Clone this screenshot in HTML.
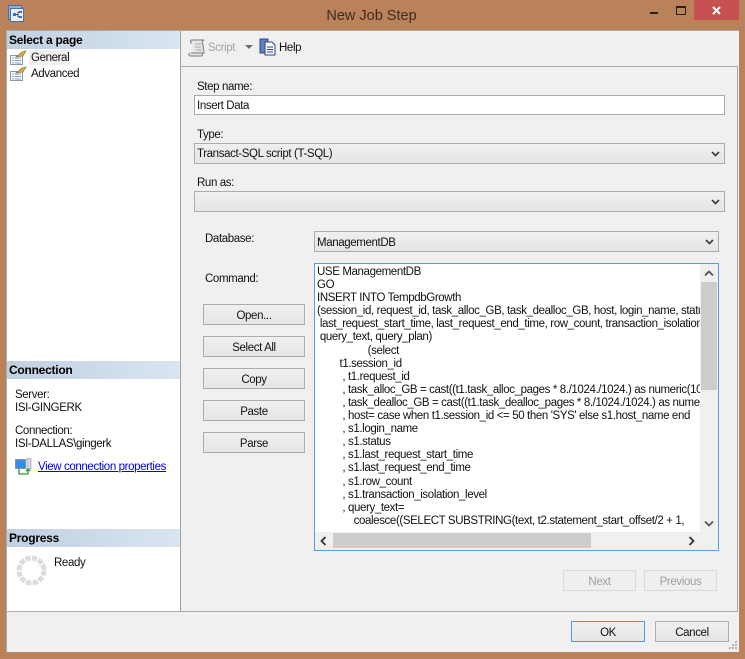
<!DOCTYPE html>
<html><head><meta charset="utf-8"><style>
html,body{margin:0;padding:0}
body{width:745px;height:659px;overflow:hidden;position:relative;background:#b9825a;font:11.5px/15px "Liberation Sans",sans-serif;letter-spacing:-.38px;color:#111}
.a,.t{position:absolute;white-space:nowrap}
.t{margin-top:1px}
.hdr{position:absolute;left:7px;width:173px;height:18px;background:linear-gradient(90deg,#c0d0e0,#d9e5f1);font-weight:bold;font-size:12px;letter-spacing:-.25px;line-height:18px;text-indent:2px;color:#000}
.btn{position:absolute;left:203px;width:100px;height:19px;border:1px solid #adadad;background:linear-gradient(#f0f0f0,#e5e5e5);text-align:center;line-height:23px}
.inp{position:absolute;box-sizing:border-box;border:1px solid #ababab;background:#fff;padding-left:2px}
.combo{position:absolute;box-sizing:border-box;border:1px solid #acacac;background:linear-gradient(#f0f0f0,#e5e5e5);padding-left:2px}
.code div{height:13.1px;line-height:13px}
</style></head><body>
<div class="t" style="left:-1px;top:7px;margin-top:0;width:745px;text-align:center;font-size:14.5px;letter-spacing:0;line-height:18px;color:#3f2c20">New Job Step</div>
<svg class="a" style="left:8px;top:5px" width="17" height="18"><rect x=".5" y=".5" width="13" height="14" fill="#8fb0dc" stroke="#4e6f9e"/><rect x="2.500" y="3.500" width="13" height="13" fill="#e6effa" stroke="#4e6f9e"/><rect x="5" y="8" width="3" height="3" fill="#3c6fc0"/><rect x="11" y="6" width="3" height="2" fill="#3c6fc0"/><rect x="11" y="11" width="3" height="2" fill="#3c6fc0"/><path d="M8 9.500h2M10 7v5M10 7h1M10 12h1" stroke="#444" fill="none"/></svg>
<div class="a" style="left:650px;top:12px;width:8px;height:2px;background:#222"></div>
<div class="a" style="left:676px;top:6px;width:8px;height:6px;border:1px solid #222;border-top-width:2px"></div>
<div class="a" style="left:694px;top:0;width:45px;height:20px;background:#c75050"></div>
<svg class="a" style="left:712px;top:6px" width="10" height="9"><path d="M1 1l7 7M8 1l-7 7" stroke="#fff" stroke-width="2" fill="none"/></svg>

<div class="a" style="left:6px;top:30px;width:733px;height:622px;background:#f0f0f0;border-top:1px solid #a9a9a9;border-left:1px solid #a9a9a9;box-sizing:border-box"></div>
<div class="a" style="left:7px;top:31px;width:173px;height:580px;background:#fff"></div>
<div class="a" style="left:180px;top:31px;width:1px;height:580px;background:#a0a0a8"></div>
<div class="a" style="left:181px;top:66px;width:556px;height:1px;background:#a9a9b3"></div>
<div class="a" style="left:737px;top:66px;width:1px;height:545px;background:#a9a9b3"></div>
<div class="a" style="left:7px;top:611px;width:731px;height:1px;background:#a9a9b3"></div>

<div class="hdr" style="top:31px">Select a page</div>
<div class="a" style="left:29px;top:50px;width:41px;height:15px;background:#f0f0f0"></div>
<svg class="a" style="left:10px;top:50px" width="17" height="15"><path d="M.5 5.500h12v9H.5z" fill="#fff" stroke="#8a97a8"/><path d="M2 8h2M5 8h6M2 10.500h2M5 10.500h6M2 13h2M5 13h6" stroke="#7f9cc6"/><path d="M6 7l6-5 4-1-3 5z" fill="#d9a93a" stroke="#7d7030" stroke-width=".6"/></svg>
<svg class="a" style="left:10px;top:66px" width="17" height="15"><path d="M.5 5.500h12v9H.5z" fill="#fff" stroke="#8a97a8"/><path d="M2 8h2M5 8h6M2 10.500h2M5 10.500h6M2 13h2M5 13h6" stroke="#7f9cc6"/><path d="M6 7l6-5 4-1-3 5z" fill="#d9a93a" stroke="#7d7030" stroke-width=".6"/></svg>
<div class="t" style="left:31px;top:50px">General</div>
<div class="t" style="left:31px;top:66px">Advanced</div>

<div class="hdr" style="top:361px">Connection</div>
<div class="t" style="left:15px;top:387px">Server:</div>
<div class="t" style="left:15px;top:400px">ISI-GINGERK</div>
<div class="t" style="left:15px;top:423px">Connection:</div>
<div class="t" style="left:15px;top:436px">ISI-DALLAS\gingerk</div>
<svg class="a" style="left:15px;top:458px" width="17" height="18"><rect x=".5" y="1.500" width="10" height="9" fill="#2f8fe8" stroke="#8a93a0"/><rect x="12" y="0" width="4" height="11" fill="#d5d8de" stroke="#8a93a0" stroke-width=".6"/><path d="M4 11v5h9v-5M11 13l2-2 2 2" fill="none" stroke="#2e9a2e" stroke-width="1.300"/></svg>
<div class="t" style="left:38px;top:459px;color:#0000e6;text-decoration:underline">View connection properties</div>

<div class="hdr" style="top:529px">Progress</div>
<svg class="a" style="left:16px;top:555px" width="31" height="31"><circle cx="15.500" cy="15.500" r="12.500" fill="none" stroke="#dcdcdc" stroke-width="5" stroke-dasharray="5.200 1.350"/></svg>
<div class="t" style="left:54px;top:555px">Ready</div>

<svg class="a" style="left:188px;top:39px" width="18" height="18"><path d="M4 1h12c-2 1-2 3-1 5l1 8H5M4 1c-2 0-2 3 0 3M2 14c-2 1-1 3 1 3h10c2 0 2-3 0-3H3" fill="#e8e8e8" stroke="#8f8f8f" stroke-width="1.200"/><path d="M7 5h6M7 8h6M8 11h6" stroke="#a9a9a9"/></svg>
<div class="t" style="left:208px;top:40px;color:#a4a4a4">Script</div>
<div class="a" style="left:245px;top:45px;width:0;height:0;border:4px solid transparent;border-top:4px solid #6e6e6e;border-bottom:0"></div>
<svg class="a" style="left:259px;top:38px" width="17" height="18"><rect x="1" y="1" width="8" height="14" fill="#5f7fc4" stroke="#32477c"/><path d="M6 4h7l3 3v10H6z" fill="#f5f7fb" stroke="#32477c"/><path d="M8 9h6M8 11.500h6M8 14h6" stroke="#32477c"/></svg>
<div class="t" style="left:279px;top:40px">Help</div>

<div class="t" style="left:197px;top:79px">Step name:</div>
<div class="inp" style="left:194px;top:95px;width:531px;height:20px;line-height:20px">Insert Data</div>
<div class="t" style="left:197px;top:127px">Type:</div>
<div class="combo" style="left:194px;top:143px;width:531px;height:21px;line-height:21px">Transact-SQL script (T-SQL)</div>
<div class="t" style="left:197px;top:175px">Run as:</div>
<div class="combo" style="left:194px;top:191px;width:531px;height:21px"></div>
<svg class="a" style="left:711px;top:151px" width="9" height="6"><path d="M1 1l3.500 3.500L8 1" fill="none" stroke="#444" stroke-width="1.800"/></svg>
<svg class="a" style="left:711px;top:199px" width="9" height="6"><path d="M1 1l3.500 3.500L8 1" fill="none" stroke="#444" stroke-width="1.800"/></svg>

<div class="t" style="left:205px;top:231px">Database:</div>
<div class="combo" style="left:314px;top:231px;width:405px;height:21px;line-height:22px">ManagementDB</div>
<svg class="a" style="left:705px;top:239px" width="9" height="6"><path d="M1 1l3.500 3.500L8 1" fill="none" stroke="#444" stroke-width="1.800"/></svg>
<div class="t" style="left:205px;top:271px">Command:</div>

<div class="btn" style="top:304px">Open...</div>
<div class="btn" style="top:336px">Select All</div>
<div class="btn" style="top:368px">Copy</div>
<div class="btn" style="top:400px">Paste</div>
<div class="btn" style="top:432px">Parse</div>

<div class="a" style="left:314px;top:263px;width:405px;height:288px;box-sizing:border-box;border:1px solid #569de5;background:#f0f0f0"></div>
<div class="a code" style="left:315px;top:264px;width:385px;height:268px;background:#fff;overflow:hidden;white-space:pre;padding-left:2px;padding-top:2px;box-sizing:border-box"><div>USE ManagementDB</div><div>GO</div><div>INSERT INTO TempdbGrowth</div><div>(session_id, request_id, task_alloc_GB, task_dealloc_GB, host, login_name, status,</div><div> last_request_start_time, last_request_end_time, row_count, transaction_isolation_level,</div><div> query_text, query_plan)</div><div>                  (select</div><div>        t1.session_id</div><div>         , t1.request_id</div><div>         , task_alloc_GB = cast((t1.task_alloc_pages * 8./1024./1024.) as numeric(10,1))</div><div>         , task_dealloc_GB = cast((t1.task_dealloc_pages * 8./1024./1024.) as numeric(10,1))</div><div>         , host= case when t1.session_id &lt;= 50 then 'SYS' else s1.host_name end</div><div>         , s1.login_name</div><div>         , s1.status</div><div>         , s1.last_request_start_time</div><div>         , s1.last_request_end_time</div><div>         , s1.row_count</div><div>         , s1.transaction_isolation_level</div><div>         , query_text=</div><div>             coalesce((SELECT SUBSTRING(text, t2.statement_start_offset/2 + 1,</div></div>
<div class="a" style="left:701px;top:282px;width:16px;height:108px;background:#cdcdcd"></div>
<div class="a" style="left:333px;top:533px;width:258px;height:15px;background:#cdcdcd"></div>
<svg class="a" style="left:704px;top:270px" width="10" height="7"><path d="M1 5.500l4-4 4 4" fill="none" stroke="#555" stroke-width="1.800"/></svg>
<svg class="a" style="left:704px;top:520px" width="10" height="7"><path d="M1 1.500l4 4 4-4" fill="none" stroke="#555" stroke-width="1.800"/></svg>
<svg class="a" style="left:320px;top:536px" width="7" height="10"><path d="M5.500 1l-4 4 4 4" fill="none" stroke="#333" stroke-width="1.800"/></svg>
<svg class="a" style="left:688px;top:536px" width="7" height="10"><path d="M1.500 1l4 4-4 4" fill="none" stroke="#333" stroke-width="1.800"/></svg>

<div class="btn" style="left:563px;top:570px;width:71px;height:19px;border-color:#d9d9d9;background:#efefef;color:#a0a0a0">Next</div>
<div class="btn" style="left:644px;top:570px;width:71px;height:19px;border-color:#d9d9d9;background:#efefef;color:#a0a0a0">Previous</div>
<div class="btn" style="left:571px;top:621px;width:72px;height:19px;border-color:#4f9be8">OK</div>
<div class="btn" style="left:655px;top:621px;width:72px;height:19px">Cancel</div>
<svg class="a" style="left:728px;top:640px" width="10" height="10" fill="#b4b4b4"><rect x="7" y="1" width="2" height="2"/><rect x="4" y="4" width="2" height="2"/><rect x="7" y="4" width="2" height="2"/><rect x="1" y="7" width="2" height="2"/><rect x="4" y="7" width="2" height="2"/><rect x="7" y="7" width="2" height="2"/></svg>
</body></html>
